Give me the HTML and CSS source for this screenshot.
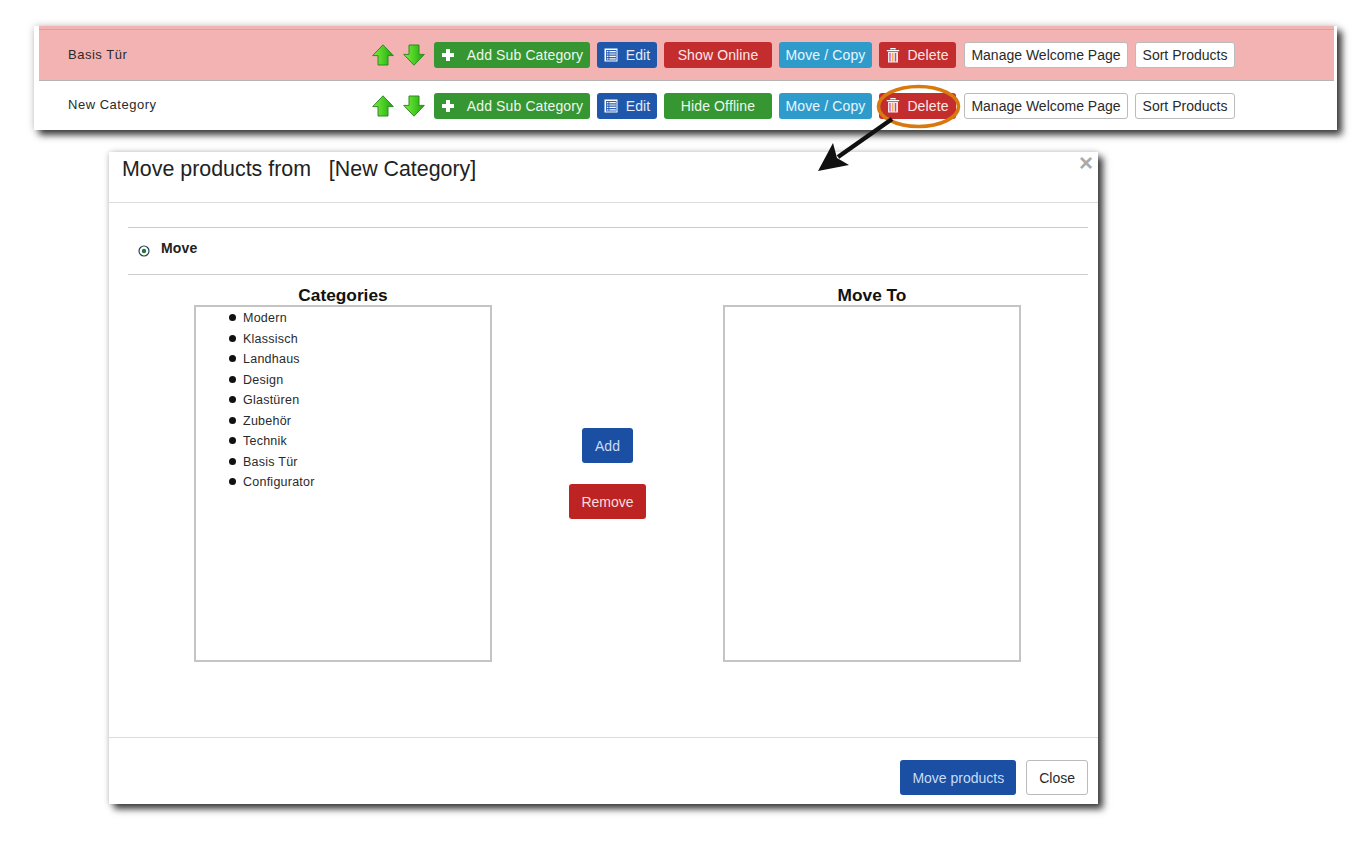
FILE: index.html
```html
<!DOCTYPE html>
<html lang="en">
<head>
<meta charset="utf-8">
<title>Move products</title>
<link rel="stylesheet" href="styles.css">
</head>
<body>
<svg width="0" height="0" class="defs">
  <defs>
    <linearGradient id="ag" x1="0" y1="0" x2="1" y2="0">
      <stop offset="0" stop-color="#86ea42"/><stop offset=".55" stop-color="#45cc22"/><stop offset="1" stop-color="#2a9c12"/>
    </linearGradient>
    <symbol id="up" viewBox="0 0 22 22"><path d="M11 .8 21.3 11.6H16V21H6V11.6H.7Z" fill="url(#ag)" stroke="#2f8a22" stroke-width="1"/></symbol>
    <symbol id="down" viewBox="0 0 22 22"><path d="M11 21.2 21.3 10.4H16V1H6V10.4H.7Z" fill="url(#ag)" stroke="#2f8a22" stroke-width="1"/></symbol>
    <symbol id="plus" viewBox="0 0 14 14"><path d="M5 1h4v4h4v4H9v4H5V9H1V5h4Z" fill="#fff"/></symbol>
    <symbol id="list" viewBox="0 0 14 14"><rect x=".5" y=".5" width="13" height="13" fill="#fff"/><rect x="2" y="2" width="10.5" height="10.5" fill="#2d5fb5"/><path d="M2.8 3.6h1.6M5.4 3.6h6.4M2.8 6h1.6M5.4 6h6.4M2.8 8.4h1.6M5.4 8.4h6.4M2.8 10.8h1.6M5.4 10.8h6.4" stroke="#fff" stroke-width="1.2"/></symbol>
    <symbol id="trash" viewBox="0 0 14 15"><path d="M5 1.5V.6h4v.9M.8 2.6h12.4" stroke="#fff" stroke-width="1.3" fill="none"/><rect x="2" y="4" width="10" height="10.5" fill="#f8e6ea"/><path d="M4 5v8.5" stroke="#d05fc0" stroke-width="1.4"/><path d="M6.7 5v8.5" stroke="#e8b050" stroke-width="1.4"/><path d="M9.5 5v8.5" stroke="#c8506a" stroke-width="1.4"/></symbol>
  </defs>
</svg>

<section class="card">
  <div class="row row-pink">
    <div class="row-inner row-inner-first">
      <span class="name">Basis Tür</span>
      <svg class="arrow"><use href="#up"/></svg>
      <svg class="arrow"><use href="#down"/></svg>
      <a class="btn green w-add"><svg class="ico ico-plus"><use href="#plus"/></svg>Add Sub Category</a>
      <a class="btn blue w-edit"><svg class="ico"><use href="#list"/></svg>Edit</a>
      <a class="btn red w-state">Show Online</a>
      <a class="btn teal w-move">Move / Copy</a>
      <a class="btn red w-del"><svg class="ico ico-trash"><use href="#trash"/></svg>Delete</a>
      <a class="btn plain w-manage">Manage Welcome Page</a>
      <a class="btn plain w-sort">Sort Products</a>
    </div>
  </div>
  <div class="row">
    <div class="row-inner">
      <span class="name">New Category</span>
      <svg class="arrow"><use href="#up"/></svg>
      <svg class="arrow"><use href="#down"/></svg>
      <a class="btn green w-add"><svg class="ico ico-plus"><use href="#plus"/></svg>Add Sub Category</a>
      <a class="btn blue w-edit"><svg class="ico"><use href="#list"/></svg>Edit</a>
      <a class="btn green w-state">Hide Offline</a>
      <a class="btn teal w-move">Move / Copy</a>
      <a class="btn red w-del"><svg class="ico ico-trash"><use href="#trash"/></svg>Delete</a>
      <a class="btn plain w-manage">Manage Welcome Page</a>
      <a class="btn plain w-sort">Sort Products</a>
    </div>
  </div>
</section>

<section class="modal">
  <header class="modal-head">
    <h1 class="title">Move products from &nbsp; [New Category]</h1>
    <span class="close">×</span>
  </header>
  <div class="modal-body">
    <div class="mode">
      <svg class="radio" viewBox="0 0 12 12"><circle cx="6" cy="6" r="5" fill="#fff" stroke="#24405e" stroke-width="1.2"/><circle cx="6" cy="6" r="2.2" fill="#1f7a2c"/></svg>
      <b class="mode-label">Move</b>
    </div>
    <div class="columns">
      <div class="col">
        <h2 class="col-title">Categories</h2>
        <ul class="box">
          <li>Modern</li><li>Klassisch</li><li>Landhaus</li><li>Design</li><li>Glastüren</li><li>Zubehör</li><li>Technik</li><li>Basis Tür</li><li>Configurator</li>
        </ul>
      </div>
      <div class="mid">
        <a class="btn big navy pad-add">Add</a>
        <a class="btn big crimson">Remove</a>
      </div>
      <div class="col">
        <h2 class="col-title">Move To</h2>
        <ul class="box"></ul>
      </div>
    </div>
  </div>
  <footer class="modal-foot">
    <a class="btn big navy">Move products</a>
    <a class="btn big plain">Close</a>
  </footer>
</section>

<svg class="overlay" viewBox="0 0 1367 851" width="1367" height="851">
  <ellipse cx="918.5" cy="106.5" rx="40" ry="20" fill="none" stroke="#d9780f" stroke-width="3.6"/>
  <path d="M892 119 838 157" stroke="#111" stroke-width="4.5" fill="none"/>
  <path d="M818 171 833 143 837 158 849 165Z" fill="#111"/>
</svg>
</body>
</html>
```
FILE: styles.css
```css
* { box-sizing: border-box; }
html, body { margin: 0; padding: 0; background: #fff; }
body {
  position: relative;
  width: 1367px;
  height: 851px;
  overflow: hidden;
  padding-top: 26px;
  font-family: "Liberation Sans", Arial, sans-serif;
  color: #222;
}
.defs { position: absolute; }
.overlay { position: absolute; left: 0; top: 0; pointer-events: none; }

.card {
  width: 1303px;
  margin-left: 34px;
  padding: 0 3px 0 5px;
  background: #fff;
  box-shadow: 5px 5px 7px rgba(0,0,0,.75), 0 0 8px rgba(0,0,0,.2);
}
.row-pink { background: #f4b3b3; padding-top: 3px; }
.row-inner {
  display: flex;
  align-items: center;
  height: 49px;
}
.row-inner-first {
  height: 52px;
  border-top: 1px solid #b9aeae;
  border-bottom: 1px solid #b5b5b5;
}
.name {
  width: 333px;
  padding-left: 29px;
  margin-bottom: 2px;
  font-size: 13px;
  letter-spacing: .52px;
  color: #2a2a2a;
}
.arrow { width: 22px; height: 22px; margin-right: 9px; flex: none; }

.btn {
  display: inline-flex;
  align-items: center;
  justify-content: center;
  height: 26px;
  margin-right: 7px;
  border-radius: 3px;
  font-size: 14px;
  letter-spacing: .12px;
  color: #fff;
  white-space: nowrap;
  flex: none;
}
.green { background: #359632; color: #eef8ec; }
.blue { background: #1f58aa; color: #e4ecfa; }
.red { background: #c42d2d; color: #fbe9e9; }
.teal { background: #2f9bcb; color: #e6f7ff; }
.plain { background: #fff; color: #2a2a2a; border: 1px solid #bbb; letter-spacing: 0; }
.w-add { width: 156px; }
.w-edit { width: 60px; }
.w-state { width: 108px; }
.w-move { width: 93px; }
.w-del { width: 77px; margin-right: 8px; }
.w-manage { width: 164px; }
.w-sort { width: 100px; margin-right: 0; }
.ico { width: 14px; height: 14px; margin-right: 8px; flex: none; }
.ico-plus { margin-right: 12px; }
.ico-trash { height: 15px; margin-right: 7px; }

.modal {
  width: 989px;
  height: 652px;
  margin: 22px 0 0 109px;
  display: flex;
  flex-direction: column;
  background: #fff;
  box-shadow: 5px 5px 7px rgba(0,0,0,.75), 0 0 6px rgba(0,0,0,.22);
}
.modal-head {
  position: relative;
  height: 51px;
  padding: 4px 13px 0;
  border-bottom: 1px solid #ddd;
}
.title {
  margin: 0;
  font-size: 21.4px;
  line-height: 26px;
  font-weight: 400;
  color: #222;
}
.close {
  position: absolute;
  right: 5px;
  top: -2px;
  font-size: 24px;
  line-height: 26px;
  font-weight: 700;
  color: #aaa;
}
.modal-body { flex: 1; padding: 24px 10px 0 19px; }
.mode {
  display: flex;
  align-items: flex-start;
  height: 48px;
  padding: 11px 0 0 10px;
  border-top: 1px solid #ccc;
  border-bottom: 1px solid #ccc;
}
.radio { width: 12px; height: 12px; margin: 6px 11px 0 0; }
.mode-label { font-size: 14px; line-height: 18px; color: #222; letter-spacing: .2px; }
.columns { display: flex; padding-left: 66px; }
.col { width: 298px; flex: none; }
.col-title {
  margin: 0;
  height: 30px;
  padding-top: 11px;
  text-align: center;
  font-size: 17.3px;
  line-height: 18px;
  font-weight: 700;
  color: #111;
}
.box {
  height: 357px;
  margin: 0;
  padding: 1px 0 0 47px;
  list-style: none;
  border: 2px solid #c4c4c4;
  font-size: 12.5px;
  line-height: 20.5px;
  letter-spacing: .24px;
  color: #2a2a2a;
}
.box li { position: relative; }
.box li::before {
  content: "";
  position: absolute;
  left: -14px;
  top: 6px;
  width: 7px;
  height: 7px;
  border-radius: 50%;
  background: #111;
}
.mid {
  width: 231px;
  flex: none;
  display: flex;
  flex-direction: column;
  align-items: center;
  gap: 21px;
  padding-top: 153px;
}
.big { height: 35px; margin: 0; padding: 0 12px; font-size: 14px; letter-spacing: 0; }
.pad-add { padding: 0 13px; }
.navy { background: #1a4fa3; color: #c9dcf5; }
.crimson { background: #bd2323; color: #f6dede; }
.modal-foot {
  height: 67px;
  display: flex;
  justify-content: flex-end;
  align-items: flex-start;
  gap: 10px;
  padding: 22px 10px 0 0;
  border-top: 1px solid #ddd;
}
```
